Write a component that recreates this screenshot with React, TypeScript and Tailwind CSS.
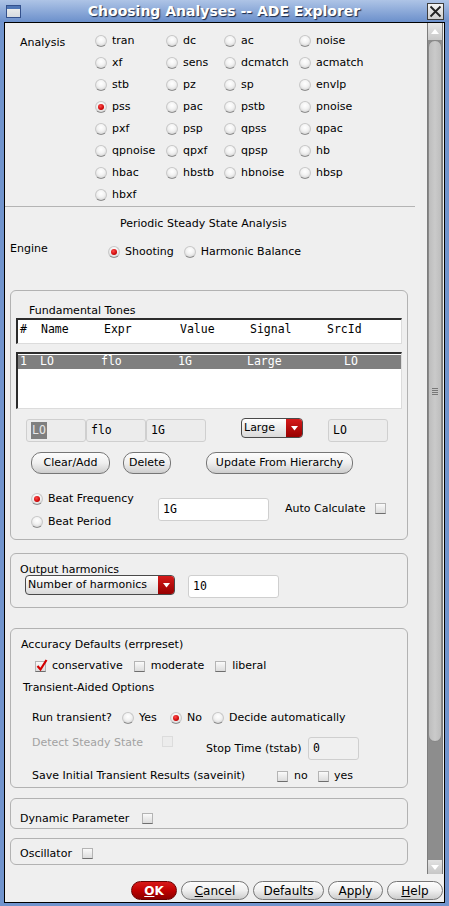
import React from 'react';

const mono = "font-['DejaVu_Sans_Mono',monospace] text-[11.5px]";

function Radio({ on = false, className = '' }: { on?: boolean; className?: string }) {
  return (
    <span
      className={`flex h-[12px] w-[12px] shrink-0 items-center justify-center rounded-full border border-[#c8c8c8] border-b-[#8e8e8e] bg-[radial-gradient(circle_at_50%_35%,#ffffff_0%,#f2f2f2_45%,#c9c9c9_100%)] ${className}`}
    >
      {on && <span className="h-[6px] w-[6px] rounded-full bg-[radial-gradient(circle_at_40%_35%,#ff4a4a,#c40000_70%)]" />}
    </span>
  );
}

function Box({ on = false, dim = false, className = '' }: { on?: boolean; dim?: boolean; className?: string }) {
  return (
    <span
      className={`relative inline-block h-[11px] w-[11px] shrink-0 border ${
        dim
          ? 'border-[#dcdcdc] bg-[#ececec]'
          : 'border-[#b4b4b4] border-b-[#6e6e6e] bg-gradient-to-b from-[#fafafa] to-[#dcdcdc]'
      } ${className}`}
    >
      {on && (
        <svg className="absolute -top-[3px] left-[0px]" width="12" height="13" viewBox="0 0 12 13">
          <path d="M1.5 7 L4.5 10.5 L10.5 1" stroke="#d40000" strokeWidth="2.2" fill="none" />
        </svg>
      )}
    </span>
  );
}

function Pill({ children, className = '', red = false }: { children: React.ReactNode; className?: string; red?: boolean }) {
  return (
    <span
      className={`flex items-center justify-center rounded-[10px] border ${
        red
          ? 'border-[#6a0000] bg-gradient-to-b from-[#d81818] via-[#c00000] to-[#8c0000] text-white'
          : 'border-[#767676] bg-gradient-to-b from-[#fdfdfd] via-[#efefef] to-[#cdcdcd]'
      } ${className}`}
    >
      {children}
    </span>
  );
}

function Drop({ label, className = '' }: { label: string; className?: string }) {
  return (
    <span className={`flex h-[20px] overflow-hidden rounded-[4px] border border-[#4a4a4a] bg-gradient-to-b from-white to-[#dadada] ${className}`}>
      <span className="flex-1 pl-[2px] leading-[18px]">{label}</span>
      <span className="flex w-[16px] items-center justify-center bg-gradient-to-b from-[#d61a1a] to-[#980000]">
        <svg width="7" height="5" viewBox="0 0 7 5">
          <path d="M0 0h7L3.5 4.5z" fill="#fff" />
        </svg>
      </span>
    </span>
  );
}

function Field({ children, white = false, className = '' }: { children?: React.ReactNode; white?: boolean; className?: string }) {
  return (
    <span
      className={`flex h-[23px] items-center rounded-[3px] border border-[#cfcfcf] pl-[4px] ${mono} ${
        white ? 'bg-white' : 'bg-[#ececec]'
      } ${className}`}
    >
      {children}
    </span>
  );
}

const analyses = [
  ['tran', 'dc', 'ac', 'noise'],
  ['xf', 'sens', 'dcmatch', 'acmatch'],
  ['stb', 'pz', 'sp', 'envlp'],
  ['pss', 'pac', 'pstb', 'pnoise'],
  ['pxf', 'psp', 'qpss', 'qpac'],
  ['qpnoise', 'qpxf', 'qpsp', 'hb'],
  ['hbac', 'hbstb', 'hbnoise', 'hbsp'],
  ['hbxf'],
];

export default function App() {
  return (
    <div className="h-[906px] w-[449px] overflow-hidden bg-[#7194cd] font-['DejaVu_Sans',sans-serif] text-[11px] text-black">
      {/* title bar */}
      <div className="flex h-[22px] items-center bg-gradient-to-b from-[#aec4e6] to-[#6c90cb]">
        <span className="ml-[6px] flex h-[13px] w-[15px] flex-col border border-[#34518c] bg-gradient-to-b from-[#f2f2ee] to-[#d6dbe0]">
          <span className="h-[3px] bg-[#4f76b6]" />
        </span>
        <span className="flex-1 text-center text-[14px] font-bold leading-[22px] text-white [text-shadow:1px_1px_1px_#1a2a48]">
          Choosing Analyses -- ADE Explorer
        </span>
        <span className="mr-[5px] flex h-[17px] w-[17px] items-center justify-center border border-[#3c3c3c] bg-gradient-to-b from-[#f4f4f4] to-[#cfcfcf]">
          <svg width="13" height="13" viewBox="0 0 13 13">
            <path d="M1.5 1.5 L11.5 11.5 M11.5 1.5 L1.5 11.5" stroke="#222" strokeWidth="1.8" />
          </svg>
        </span>
      </div>

      <div className="mx-[4px] flex h-[881px] flex-col border border-black bg-[#efefef]">
        <div className="flex h-[851px]">
          {/* scrollable content */}
          <div className="flex-1 overflow-hidden">
            {/* analysis */}
            <div className="flex pt-[7px]">
              <div className="w-[90px] pl-[15px] pt-[5px]">Analysis</div>
              <div className="grid grid-cols-[71px_58px_75px_100px]">
                {analyses.flat().map((a) => (
                  <div key={a} className="flex h-[22px] items-center gap-[5px]">
                    <Radio on={a === 'pss'} />
                    <span>{a}</span>
                  </div>
                ))}
              </div>
            </div>
            <div className="h-px w-[410px] bg-[#b4b4b4]" />

            <div className="mt-[10px] h-[14px] pl-[115px] leading-[14px]">Periodic Steady State Analysis</div>

            <div className="mt-[10px] flex h-[22px] items-center">
              <span className="mb-[6px] ml-[5px] w-[98px]">Engine</span>
              <Radio on />
              <span className="ml-[5px]">Shooting</span>
              <Radio className="ml-[10px]" />
              <span className="ml-[5px]">Harmonic Balance</span>
            </div>

            {/* fundamental tones */}
            <div className="ml-[5px] mt-[27px] h-[250px] w-[398px] rounded-[6px] border border-[#b2b2b2]">
              <div className="box-content h-[14px] pl-[18px] pt-[13px] leading-[14px]">Fundamental Tones</div>
              <div className={`ml-[5px] flex h-[26px] w-[386px] items-center border-l-2 border-t-2 border-b border-r border-l-[#2c2c2c] border-t-[#2c2c2c] border-b-[#dcdcdc] border-r-[#dcdcdc] bg-white pb-[4px] pl-[2px] ${mono}`}>
                <span className="w-[21px]">#</span>
                <span className="w-[63px]">Name</span>
                <span className="w-[76px]">Expr</span>
                <span className="w-[70px]">Value</span>
                <span className="w-[77px]">Signal</span>
                <span>SrcId</span>
              </div>
              <div className="ml-[5px] mt-[8px] h-[57px] w-[386px] border-l-2 border-t-2 border-b border-r border-l-[#2c2c2c] border-t-[#2c2c2c] border-b-[#dcdcdc] border-r-[#dcdcdc] bg-white pt-[1px]">
                <div className={`flex h-[14px] items-center bg-[#7f7f7f] pl-[2px] text-white ${mono}`}>
                  <span className="w-[20px]">1</span>
                  <span className="w-[61px]">LO</span>
                  <span className="w-[77px]">flo</span>
                  <span className="w-[69px]">1G</span>
                  <span className="w-[97px]">Large</span>
                  <span>LO</span>
                </div>
              </div>

              <div className="mt-[10px] flex h-[23px] items-start">
                <Field className="ml-[15px] w-[60px] border-[#8c8c8c] border-r-[#cfcfcf] border-b-[#cfcfcf] pl-[3px]">
                  <span className="bg-[#7f7f7f] px-[1px] text-[#e8e8e8]">LO</span>
                </Field>
                <Field className="w-[60px]">flo</Field>
                <Field className="w-[60px]">1G</Field>
                <Drop label="Large" className="ml-[35px] mt-[-1px] w-[62px]" />
                <Field className="ml-[25px] w-[60px]">LO</Field>
              </div>

              <div className="mt-[10px] flex h-[22px]">
                <Pill className="ml-[20px] w-[79px]">Clear/Add</Pill>
                <Pill className="ml-[13px] w-[48px]">Delete</Pill>
                <Pill className="ml-[35px] w-[147px]">Update From Hierarchy</Pill>
              </div>

              <div className="mt-[14px] flex">
                <div className="ml-[20px] w-[127px]">
                  <div className="flex h-[22px] items-center gap-[5px]">
                    <Radio on />
                    <span>Beat Frequency</span>
                  </div>
                  <div className="mt-[1px] flex h-[22px] items-center gap-[5px]">
                    <Radio />
                    <span>Beat Period</span>
                  </div>
                </div>
                <div className="mt-[10px] flex h-[23px] items-center">
                  <Field white className="w-[111px]">1G</Field>
                  <span className="ml-[16px]">Auto Calculate</span>
                  <Box className="ml-[10px] mb-[2px]" />
                </div>
              </div>
            </div>

            {/* output harmonics */}
            <div className="ml-[5px] mt-[13px] h-[55px] w-[398px] rounded-[6px] border border-[#b2b2b2]">
              <div className="box-content h-[13px] pl-[9px] pt-[8px] leading-[15px]">Output harmonics</div>
              <div className="flex items-start">
                <Drop label="Number of harmonics" className="ml-[14px] w-[150px]" />
                <Field white className="ml-[13px] w-[91px]">10</Field>
              </div>
            </div>

            {/* accuracy */}
            <div className="ml-[5px] mt-[20px] h-[160px] w-[398px] rounded-[6px] border border-[#b2b2b2]">
              <div className="box-content h-[14px] pl-[10px] pt-[9px] leading-[14px]">Accuracy Defaults (errpreset)</div>
              <div className="mt-[3px] flex h-[22px] items-center">
                <Box on className="ml-[24px]" />
                <span className="ml-[6px]">conservative</span>
                <Box className="ml-[11px]" />
                <span className="ml-[6px]">moderate</span>
                <Box className="ml-[11px]" />
                <span className="ml-[6px]">liberal</span>
              </div>
              <div className="flex h-[22px] items-center pl-[12px]">Transient-Aided Options</div>
              <div className="mt-[8px] flex h-[22px] items-center pl-[21px]">
                <span className="w-[90px]">Run transient?</span>
                <Radio />
                <span className="ml-[5px] w-[31px]">Yes</span>
                <Radio on />
                <span className="ml-[5px] w-[25px]">No</span>
                <Radio />
                <span className="ml-[5px]">Decide automatically</span>
              </div>
              <div className="flex h-[30px] items-start pl-[21px]">
                <span className="mt-[7px] w-[130px] leading-[14px] text-[#a2a2a2]">Detect Steady State</span>
                <Box dim className="mt-[7px]" />
                <span className="ml-[33px] mt-[13px] w-[102px] leading-[14px]">Stop Time (tstab)</span>
                <Field className="mt-[8px] w-[51px] border-[#c4c4c4] bg-[#f0f0f0]">0</Field>
              </div>
              <div className="mt-[6px] flex h-[22px] items-center pl-[21px]">
                <span className="w-[245px]">Save Initial Transient Results (saveinit)</span>
                <Box />
                <span className="ml-[6px] w-[24px]">no</span>
                <Box />
                <span className="ml-[5px]">yes</span>
              </div>
            </div>

            {/* dynamic parameter */}
            <div className="ml-[5px] mt-[10px] flex h-[31px] w-[398px] items-start rounded-[6px] border border-[#b2b2b2] pl-[9px] pt-[13px]">
              <span className="leading-[14px]">Dynamic Parameter</span>
              <Box className="ml-[13px] mt-[1px]" />
            </div>

            {/* oscillator */}
            <div className="ml-[5px] mt-[9px] flex h-[27px] w-[398px] items-start rounded-[6px] border border-[#b2b2b2] pl-[9px] pt-[8px]">
              <span className="leading-[14px]">Oscillator</span>
              <Box className="ml-[10px] mt-[1px]" />
            </div>
          </div>

          {/* scrollbar */}
          <div className="mr-[1px] flex w-[16px] flex-col border-x border-[#7c7c7c] bg-[#8d8d8d]">
            <div className="flex h-[17px] items-center justify-center bg-gradient-to-b from-[#e6e6e6] to-[#c8c8c8]">
              <svg width="8" height="5" viewBox="0 0 8 5">
                <path d="M4 0L8 5H0z" fill="#fff" />
              </svg>
            </div>
            <div className="flex h-[702px] items-center justify-center rounded-[7px] border border-[#888] bg-gradient-to-r from-[#bdbdbd] via-[#cacaca] to-[#bdbdbd]">
              <div className="flex flex-col gap-[1px]">
                <span className="h-px w-[6px] bg-[#777]" />
                <span className="h-px w-[6px] bg-[#777]" />
                <span className="h-px w-[6px] bg-[#777]" />
                <span className="h-px w-[6px] bg-[#777]" />
              </div>
            </div>
            <div className="flex-1" />
            <div className="flex h-[14px] items-center justify-center bg-gradient-to-b from-[#e2e2e2] to-[#c6c6c6]">
              <svg width="8" height="5" viewBox="0 0 8 5">
                <path d="M0 0H8L4 5z" fill="#fff" />
              </svg>
            </div>
          </div>
        </div>

        {/* bottom buttons */}
        <div className="flex justify-end gap-[4px] pr-[1px] pt-[7px] text-[12px]">
          <Pill red className="h-[19px] w-[46px] font-bold">
            <span className="underline">O</span>K
          </Pill>
          <Pill className="h-[19px] w-[68px]">
            <span className="underline">C</span>ancel
          </Pill>
          <Pill className="h-[19px] w-[71px]">Defaults</Pill>
          <Pill className="h-[19px] w-[55px]">Apply</Pill>
          <Pill className="h-[19px] w-[56px]">
            <span className="underline">H</span>elp
          </Pill>
        </div>
      </div>
    </div>
  );
}
